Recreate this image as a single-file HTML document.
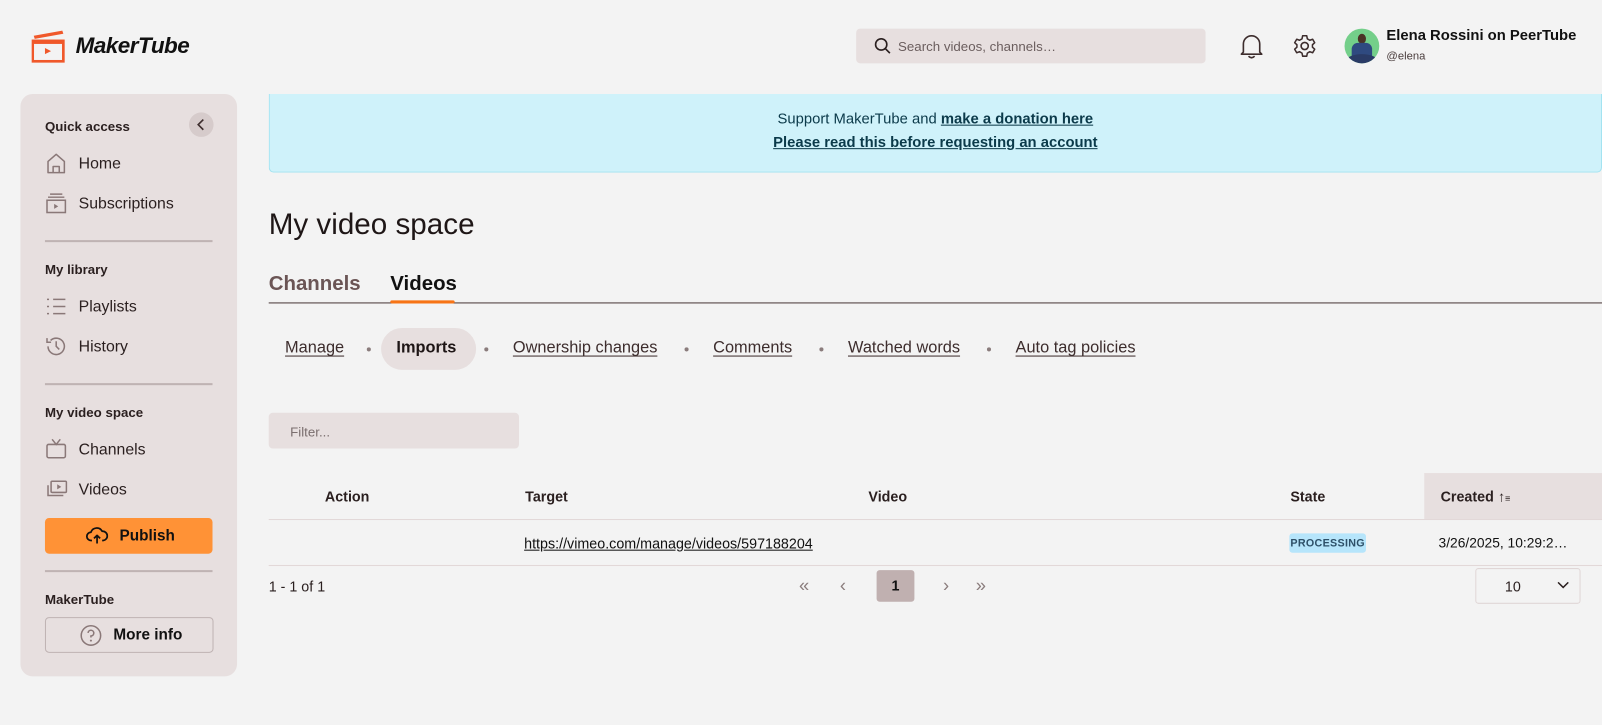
<!DOCTYPE html>
<html><head><meta charset="utf-8"><style>
*{box-sizing:border-box;margin:0;padding:0}
body{width:1602px;height:725px;background:#f3f3f3;font-family:"Liberation Sans",sans-serif;color:#2a1f1f;position:relative;overflow:hidden}
#w{position:absolute;left:0;top:0;width:1568px;height:710px;transform:scale(1.02168);transform-origin:0 0}
.a{position:absolute}
.side{left:20px;top:92px;width:212px;height:570px;background:#e7dfdf;border-radius:12px}
.sh{font-size:13px;font-weight:bold;color:#2a1f1f}
.it{font-size:15.5px;color:#2a1f1f}
.hr{left:44px;width:164px;height:2px;background:#bfb3b3}
svg{position:absolute}
.tab{font-size:16px;color:#3d2d2d;text-decoration:underline;text-underline-offset:3px}
.dot{width:4px;height:4px;border-radius:2px;background:#8a7c7c}
.th{font-size:14px;font-weight:bold;top:478px}
</style></head><body><div id="w">
<svg style="left:31px;top:28px" width="34" height="36" viewBox="0 0 34 36"><path d="M2 7 L30 2 L31 5 L3 10Z" fill="#f0582a"/><rect x="1" y="12" width="30" height="20" fill="none" stroke="#f0582a" stroke-width="2.6"/><rect x="1" y="11" width="30" height="4" fill="#f0582a"/><path d="M13 19 L19 22 L13 25Z" fill="#f0582a"/></svg>
<div class="a" style="left:74px;top:32px;font-size:22px;font-weight:bold;font-style:italic;color:#111;letter-spacing:-0.5px">MakerTube</div>
<div class="a" style="left:838px;top:28px;width:342px;height:34px;background:#e7dfdf;border-radius:4px"></div>
<svg style="left:855px;top:36px" width="18" height="18" viewBox="0 0 18 18"><circle cx="7.5" cy="7.5" r="5.5" fill="none" stroke="#2a1f1f" stroke-width="1.6"/><path d="M11.5 11.5 L16 16" stroke="#2a1f1f" stroke-width="1.6"/></svg>
<div class="a" style="left:879px;top:38px;font-size:13px;color:#6b5e5e">Search videos, channels…</div>
<svg style="left:1213px;top:32px" width="24" height="26" viewBox="0 0 24 26"><path d="M4 19 L4 11 A8 8 0 0 1 20 11 L20 19 L22 21 L2 21Z" fill="none" stroke="#3d2d2d" stroke-width="1.6" stroke-linejoin="round"/><path d="M9 23 Q12 26 15 23" fill="none" stroke="#3d2d2d" stroke-width="1.6"/></svg>
<svg style="left:1265px;top:33px" width="24" height="24" viewBox="0 0 24 24"><circle cx="12" cy="12" r="3.5" fill="none" stroke="#3d2d2d" stroke-width="1.6"/><path d="M10 2h4l.6 3 2.4 1.4 2.8-1 2 3.4-2.2 2v2.4l2.2 2-2 3.4-2.8-1L14.6 19 14 22h-4l-.6-3L7 17.6l-2.8 1-2-3.4 2.2-2v-2.4l-2.2-2 2-3.4 2.8 1L9.4 5Z" fill="none" stroke="#3d2d2d" stroke-width="1.5" stroke-linejoin="round"/></svg>
<div class="a" style="left:1316px;top:28px;width:34px;height:34px;border-radius:50%;overflow:hidden;background:#74cf8a"><div class="a" style="left:13px;top:5px;width:8px;height:10px;border-radius:50%;background:#4a3326"></div><div class="a" style="left:7px;top:14px;width:20px;height:14px;border-radius:6px 6px 0 0;background:#2f4a80"></div><div class="a" style="left:2px;top:25px;width:30px;height:12px;border-radius:50%;background:#2a3b66"></div></div>
<div class="a" style="left:1357px;top:27px;font-size:14.5px;font-weight:bold;color:#111">Elena Rossini on PeerTube</div>
<div class="a" style="left:1357px;top:49px;font-size:11px;color:#4a3d3d">@elena</div>
<div class="a side"></div>
<div class="a sh" style="left:44px;top:116px">Quick access</div>
<div class="a" style="left:185px;top:110px;width:24px;height:24px;border-radius:50%;background:#d6cbcb"></div>
<svg style="left:185px;top:110px" width="24" height="24"><path d="M14 7 L9 12 L14 17" fill="none" stroke="#3d2d2d" stroke-width="1.6"/></svg>
<svg style="left:44px;top:149px" width="22" height="22"><path d="M3 20V9L11 2L19 9V20Z M8 20V14H14V20" fill="none" stroke="#8a7878" stroke-width="1.5" stroke-linejoin="round"/></svg>
<div class="a it" style="left:77px;top:152px">Home</div>
<svg style="left:44px;top:188px" width="22" height="22"><path d="M5 2h12M3 5h16" stroke="#8a7878" stroke-width="1.4"/><rect x="2" y="8" width="18" height="12" fill="none" stroke="#8a7878" stroke-width="1.5"/><path d="M9 11.5 L13 14 L9 16.5Z" fill="#8a7878"/></svg>
<div class="a it" style="left:77px;top:191px">Subscriptions</div>
<div class="a hr" style="top:235px"></div>
<div class="a sh" style="left:44px;top:256px">My library</div>
<svg style="left:44px;top:289px" width="22" height="22"><path d="M2 4h2M2 11h2M2 18h2M8 4h12M8 11h12M8 18h12" stroke="#8a7878" stroke-width="1.5"/></svg>
<div class="a it" style="left:77px;top:292px">Playlists</div>
<svg style="left:44px;top:328px" width="22" height="22"><path d="M3 11A8 8 0 1 0 5.5 5.2M2 3v4h4M11 6v5l3 3" fill="none" stroke="#8a7878" stroke-width="1.5"/></svg>
<div class="a it" style="left:77px;top:331px">History</div>
<div class="a hr" style="top:375px"></div>
<div class="a sh" style="left:44px;top:396px">My video space</div>
<svg style="left:44px;top:428px" width="22" height="22"><path d="M7 2l4 5 4-5" fill="none" stroke="#8a7878" stroke-width="1.5"/><rect x="2" y="7" width="18" height="13" rx="1.5" fill="none" stroke="#8a7878" stroke-width="1.5"/></svg>
<div class="a it" style="left:77px;top:432px">Channels</div>
<svg style="left:44px;top:468px" width="22" height="22"><rect x="6" y="3" width="15" height="11" rx="1" fill="none" stroke="#8a7878" stroke-width="1.5"/><path d="M3 7v10h15" fill="none" stroke="#8a7878" stroke-width="1.5"/><path d="M12 6l4 2.5-4 2.5Z" fill="#8a7878"/></svg>
<div class="a it" style="left:77px;top:471px">Videos</div>
<div class="a" style="left:44px;top:507px;width:164px;height:35px;background:#ff9236;border-radius:4px"></div>
<svg style="left:84px;top:514px" width="22" height="20"><path d="M6 15H5A4 4 0 0 1 5 7 A6 6 0 0 1 16 6 A4.5 4.5 0 0 1 17 15H16M11 18V10M8 13l3-3 3 3" fill="none" stroke="#111" stroke-width="1.7" stroke-linejoin="round"/></svg>
<div class="a" style="left:117px;top:516px;font-size:15px;font-weight:bold;color:#111">Publish</div>
<div class="a hr" style="top:558px"></div>
<div class="a sh" style="left:44px;top:579px">MakerTube</div>
<div class="a" style="left:44px;top:604px;width:165px;height:35px;border:1px solid #bfb3b3;border-radius:4px"></div>
<svg style="left:78px;top:611px" width="22" height="22"><circle cx="11" cy="11" r="9.5" fill="none" stroke="#8a7878" stroke-width="1.5"/><path d="M8.2 8.5A2.8 2.8 0 1 1 11 11.5V13" fill="none" stroke="#8a7878" stroke-width="1.5"/><circle cx="11" cy="16" r="1" fill="#8a7878"/></svg>
<div class="a" style="left:111px;top:613px;font-size:15px;font-weight:bold;color:#111">More info</div>
<div class="a" style="left:263px;top:92px;width:1305px;height:77px;background:#cff2fa;border:1px solid #a2e3f1;border-top:none;border-radius:0 0 5px 5px"></div>
<div class="a" style="left:263px;top:109px;width:1305px;text-align:center;font-size:14.5px;color:#0b3a4a">Support MakerTube and <b style="text-decoration:underline">make a donation here</b></div>
<div class="a" style="left:263px;top:132px;width:1305px;text-align:center;font-size:14.5px;color:#0b3a4a"><b style="text-decoration:underline">Please read this before requesting an account</b></div>
<div class="a" style="left:263px;top:204px;font-size:29px;color:#1e1616">My video space</div>
<div class="a" style="left:263px;top:267px;font-size:20px;font-weight:bold;color:#6b5555">Channels</div>
<div class="a" style="left:382px;top:267px;font-size:20px;font-weight:bold;color:#111">Videos</div>
<div class="a" style="left:263px;top:296px;width:1305px;height:1px;background:#4a3838"></div>
<div class="a" style="left:382px;top:294px;width:63px;height:3px;background:#f77416;border-radius:2px"></div>
<div class="a tab" style="left:279px;top:332px">Manage</div>
<div class="a dot" style="left:359px;top:340px"></div>
<div class="a" style="left:373px;top:321px;width:93px;height:41px;background:#e7dfdf;border-radius:21px"></div>
<div class="a" style="left:388px;top:332px;font-size:16px;font-weight:bold;color:#1e1616">Imports</div>
<div class="a dot" style="left:474px;top:340px"></div>
<div class="a tab" style="left:502px;top:332px">Ownership changes</div>
<div class="a dot" style="left:670px;top:340px"></div>
<div class="a tab" style="left:698px;top:332px">Comments</div>
<div class="a dot" style="left:802px;top:340px"></div>
<div class="a tab" style="left:830px;top:332px">Watched words</div>
<div class="a dot" style="left:966px;top:340px"></div>
<div class="a tab" style="left:994px;top:332px">Auto tag policies</div>
<div class="a" style="left:263px;top:404px;width:245px;height:35px;background:#e7dfdf;border-radius:4px"></div>
<div class="a" style="left:284px;top:415px;font-size:13px;color:#7a6e6e">Filter...</div>
<div class="a" style="left:1394px;top:463px;width:174px;height:45px;background:#e7dfdf"></div>
<div class="a th" style="left:318px">Action</div>
<div class="a th" style="left:514px">Target</div>
<div class="a th" style="left:850px">Video</div>
<div class="a th" style="left:1263px">State</div>
<div class="a th" style="left:1410px">Created <span style="font-weight:normal">↑</span><span style="font-size:9px">≡</span></div>
<div class="a" style="left:263px;top:508px;width:1305px;height:1px;background:#e2d8d8"></div>
<div class="a" style="left:513px;top:524px;font-size:14px;color:#111;text-decoration:underline">https://vimeo.com/manage/videos/597188204</div>
<div class="a" style="left:1262px;top:522px;width:75px;height:19px;background:#b6e5fb;border-radius:3px"></div>
<div class="a" style="left:1262px;top:526px;width:75px;font-size:10.5px;font-weight:bold;color:#2e5068;text-align:center;letter-spacing:.3px">PROCESSING</div>
<div class="a" style="left:1408px;top:524px;font-size:13.5px;color:#111">3/26/2025, 10:29:2…</div>
<div class="a" style="left:263px;top:553px;width:1305px;height:1px;background:#e2d8d8"></div>
<div class="a" style="left:263px;top:566px;font-size:14px;color:#2a1f1f">1 - 1 of 1</div>
<div class="a" style="left:782px;top:563px;font-size:18px;color:#8a7c7c">«</div>
<div class="a" style="left:822px;top:563px;font-size:18px;color:#8a7c7c">‹</div>
<div class="a" style="left:858px;top:558px;width:37px;height:31px;background:#c0b0b0;border-radius:3px;text-align:center;line-height:31px;font-size:14px;font-weight:bold;color:#111">1</div>
<div class="a" style="left:923px;top:563px;font-size:18px;color:#8a7c7c">›</div>
<div class="a" style="left:955px;top:563px;font-size:18px;color:#8a7c7c">»</div>
<div class="a" style="left:1444px;top:556px;width:103px;height:35px;border:1px solid #e0d6d6;border-radius:3px"></div>
<div class="a" style="left:1473px;top:566px;font-size:14px;color:#2a1f1f">10</div>
<svg style="left:1522px;top:566px" width="16" height="14"><path d="M3 4l5 5 5-5" fill="none" stroke="#2a1f1f" stroke-width="1.5"/></svg>
</div></body></html>
